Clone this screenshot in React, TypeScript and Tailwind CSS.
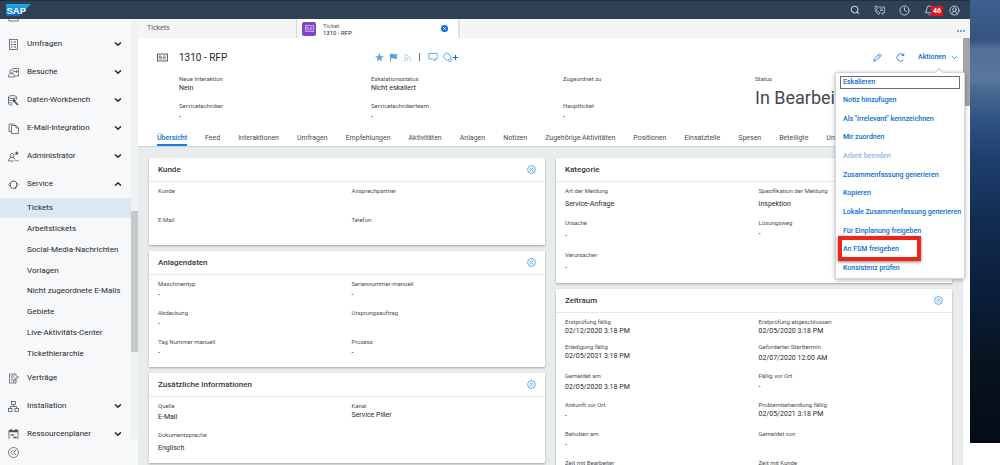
import { useState } from "react";
import type { ReactNode } from "react";
import {
  ChevronDown,
  ChevronUp,
  Clock,
  Bell,
  Search,
  CircleUserRound,
  Rss,
} from "lucide-react";
import clsx from "clsx";

type IconProps = { children: ReactNode; className?: string };

function Glyph({ children, className = "size-[11px]" }: IconProps) {
  return (
    <svg
      viewBox="0 0 22 22"
      fill="none"
      stroke="currentColor"
      strokeWidth="1.5"
      className={className}
      aria-hidden="true"
    >
      {children}
    </svg>
  );
}

const icons = {
  partner: (
    <Glyph>
      <path d="M2 20h18v-5H2zM6 15V9h10v6" />
    </Glyph>
  ),
  survey: (
    <Glyph>
      <rect x="3" y="1" width="16" height="20" />
      <path d="M6 6h3M6 11h3M6 16h3M12 6h4M12 11h4M12 16h4" strokeWidth="2" />
    </Glyph>
  ),
  visit: (
    <Glyph>
      <path d="M9 3h12v15h-7M12 9h6M16 6l3 3-3 3" />
      <circle cx="7" cy="9" r="3.5" />
      <path d="M1 20c0-5 2-7 6-7s6 2 6 7z" />
    </Glyph>
  ),
  data: (
    <Glyph>
      <ellipse cx="9" cy="4" rx="8" ry="3" />
      <path d="M1 4v13c0 2 3 3 8 3M1 8c0 2 3 3 8 3M1 13c0 2 3 3 8 3M17 4v5" />
      <path d="M11 11l9 9" strokeWidth="3.5" />
      <path d="M9 11l3-3 3 3-3 3z" fill="currentColor" />
    </Glyph>
  ),
  mail: (
    <Glyph>
      <path d="M7 17H2V2h9l3 3" />
      <path d="M7 5h9l5 5v11H7z" />
      <path d="M16 5v5h5" />
    </Glyph>
  ),
  admin: (
    <Glyph>
      <circle cx="8" cy="9" r="4" />
      <path d="M1 20c0-5 3-7 7-7 3 0 5 1 6 4M1 20h11" />
      <path d="M15 19h2M19 19h2" strokeWidth="2.5" />
      <path
        d="M17.5 0l1.2 3 3.3.2-2.5 2 .9 3.2-2.9-1.7-2.9 1.7.9-3.2-2.5-2 3.3-.2z"
        fill="currentColor"
        stroke="none"
      />
    </Glyph>
  ),
  service: (
    <Glyph>
      <path d="M5 7a7.5 7.5 0 0 1 12 0M4 15a7.5 7.5 0 0 0 5 4" strokeWidth="2" />
      <path d="M5 7l-4 4 4 4zM17 7l4 4-4 4z" />
      <path d="M17 15c-1 3-3 4-6 4" strokeWidth="2.5" />
    </Glyph>
  ),
  contract: (
    <Glyph>
      <path d="M16 13v7H3V2h13v4M6 6h7M6 10h5M6 14h4" />
      <path d="M11 15l8-9 2 2-8 8-3 1z" />
    </Glyph>
  ),
  install: (
    <Glyph>
      <rect x="7" y="1" width="8" height="6" />
      <rect x="1" y="15" width="7" height="6" />
      <rect x="14" y="15" width="7" height="6" />
      <path d="M11 7v4M4.5 15v-4h13v4" />
    </Glyph>
  ),
  planner: (
    <Glyph>
      <rect x="2" y="3" width="18" height="18" />
      <path d="M2 5h18M6 0v4M16 0v4" strokeWidth="3" />
      <path d="M5 12h6M9 10l2 2-2 2M11 17h7M14 15l-2 2 2 2" strokeWidth="2" />
    </Glyph>
  ),
};

type NavItem = {
  label: string;
  icon: ReactNode;
  leaf?: boolean;
  children?: string[];
};

const navItems: NavItem[] = [
  { label: "Partner", icon: icons.partner },
  { label: "Umfragen", icon: icons.survey },
  { label: "Besuche", icon: icons.visit },
  { label: "Daten-Workbench", icon: icons.data },
  { label: "E-Mail-Integration", icon: icons.mail },
  { label: "Administrator", icon: icons.admin },
  {
    label: "Service",
    icon: icons.service,
    children: [
      "Tickets",
      "Arbeitstickets",
      "Social-Media-Nachrichten",
      "Vorlagen",
      "Nicht zugeordnete E-Mails",
      "Gebiete",
      "Live-Aktivitäts-Center",
      "Tickethierarchie",
    ],
  },
  { label: "Verträge", icon: icons.contract, leaf: true },
  { label: "Installation", icon: icons.install },
  { label: "Ressourcenplaner", icon: icons.planner },
];

const tabs = [
  "Übersicht",
  "Feed",
  "Interaktionen",
  "Umfragen",
  "Empfehlungen",
  "Aktivitäten",
  "Anlagen",
  "Notizen",
  "Zugehörige Aktivitäten",
  "Positionen",
  "Einsatzteile",
  "Spesen",
  "Beteiligte",
  "Unternehmen",
];

const actions = [
  "Eskalieren",
  "Notiz hinzufügen",
  'Als "Irrelevant" kennzeichnen',
  "Mir zuordnen",
  "Arbeit beenden",
  "Zusammenfassung generieren",
  "Kopieren",
  "Lokale Zusammenfassung generieren",
  "Für Einplanung freigeben",
  "An FSM freigeben",
  "Konsistenz prüfen",
];

type Size = "tight" | "normal" | "tall";
type FieldData = { label: string; value?: string; size?: Size };

const headerFields: FieldData[] = [
  { label: "Neue Interaktion", value: "Nein", size: "tight" },
  { label: "Eskalationsstatus", value: "Nicht eskaliert", size: "tight" },
  { label: "Zugeordnet zu", size: "tight" },
  { label: "Servicetechniker", value: "-" },
  { label: "Servicetechnikerteam", value: "-" },
  { label: "Hauptticket", value: "-" },
];

const leftCards: { title: string; fields: FieldData[] }[] = [
  {
    title: "Kunde",
    fields: [
      { label: "Kunde" },
      { label: "Ansprechpartner" },
      { label: "E-Mail" },
      { label: "Telefon" },
    ],
  },
  {
    title: "Anlagendaten",
    fields: [
      { label: "Maschinentyp", value: "-" },
      { label: "Seriennummer-manuell", value: "-" },
      { label: "Abdeckung", value: "-" },
      { label: "Ursprungsauftrag" },
      { label: "Tag Nummer manuell", value: "-" },
      { label: "Prozess", value: "-" },
    ],
  },
  {
    title: "Zusätzliche Informationen",
    fields: [
      { label: "Quelle", value: "E-Mail" },
      { label: "Kanal", value: "Service Piller", size: "tight" },
      { label: "Dokumentsprache", value: "Englisch", size: "tall" },
    ],
  },
];

const rightCards: { title: string; fields: FieldData[] }[] = [
  {
    title: "Kategorie",
    fields: [
      { label: "Art der Meldung", value: "Service-Anfrage", size: "tall" },
      { label: "Spezifikation der Meldung", value: "Inspektion", size: "tall" },
      { label: "Ursache", value: "-", size: "tall" },
      { label: "Lösungsweg", value: "-" },
      { label: "Verursacher", value: "-", size: "tall" },
    ],
  },
  {
    title: "Zeitraum",
    fields: [
      { label: "Erstprüfung fällig", value: "02/12/2020 3:18 PM", size: "tight" },
      { label: "Erstprüfung abgeschlossen", value: "02/05/2020 3:18 PM", size: "tight" },
      { label: "Erledigung fällig", value: "02/05/2021 3:18 PM", size: "tight" },
      { label: "Geforderter Starttermin", value: "02/07/2020 12:00 AM" },
      { label: "Gemeldet am", value: "02/05/2020 3:18 PM" },
      { label: "Fällig vor Ort", value: "-" },
      { label: "Ankunft vor Ort", value: "-" },
      { label: "Problembehandlung fällig", value: "02/05/2021 3:18 PM", size: "tight" },
      { label: "Behoben am", value: "-" },
      { label: "Gemeldet von" },
      { label: "Zeit mit Bearbeiter", value: "-" },
      { label: "Zeit mit Kunde", value: "-" },
    ],
  },
];

function Field({ label, value, size = "normal" }: FieldData) {
  return (
    <div>
      <dt className="text-[6px] leading-[10px] text-[#4a4e52]">{label}</dt>
      <dd
        className={clsx(
          "text-[7px] text-[#25282b]",
          size === "tight" && "h-[10px] leading-[8px]",
          size === "normal" && "h-[14px] leading-[12px]",
          size === "tall" && "h-[17px] leading-[16px]"
        )}
      >
        {value}
      </dd>
    </div>
  );
}

function Card({ title, fields }: { title: string; fields: FieldData[] }) {
  return (
    <section className="bg-white shadow-[0_1px_2px_rgba(0,0,0,0.3)]">
      <header className="flex h-6 items-center justify-between border-b border-[#e8eaec] px-[9px]">
        <h2 className="text-[8px] font-medium text-[#32363a]">{title}</h2>
        <button type="button" aria-label={`${title} einklappen`} className="text-[#4a97e0]">
          <Glyph className="size-[9px]">
            <circle cx="11" cy="11" r="9.5" strokeWidth="2" />
            <path d="M6.5 11l4.5-4.5 4.5 4.5M6.5 16l4.5-4.5 4.5 4.5" strokeWidth="2" />
          </Glyph>
        </button>
      </header>
      <dl className="grid grid-cols-2 gap-y-[5px] pt-1 pb-1.5 pl-[9px]">
        {fields.map((field) => (
          <Field key={field.label} {...field} />
        ))}
      </dl>
    </section>
  );
}

function TopBar() {
  return (
    <header className="flex h-[19px] shrink-0 items-center justify-between border-t border-[#22303e] bg-[#2f4056] pr-[3px] pl-1.5 text-[#c3d3e4]">
      <svg viewBox="0 0 50 24" className="h-3 w-[25px]" role="img" aria-label="SAP">
        <defs>
          <linearGradient id="sap" x1="0" y1="0" x2="0" y2="1">
            <stop offset="0" stopColor="#16b0ee" />
            <stop offset="1" stopColor="#1661be" />
          </linearGradient>
        </defs>
        <path d="M0 0h50L26 24H0z" fill="url(#sap)" />
        <text
          x="1"
          y="19"
          fill="#fff"
          fontSize="19"
          fontWeight="700"
          fontFamily="Liberation Sans, sans-serif"
        >
          SAP
        </text>
      </svg>
      <div className="flex">
        <button type="button" aria-label="Suchen" className="flex w-[25px] justify-center">
          <Search size={10} strokeWidth={2.5} />
        </button>
        <button type="button" aria-label="Telefonie" className="flex w-[25px] justify-center">
          <Glyph className="size-[11px]">
            <path d="M3 2c-3 5 0 14 7 17l2-3-3-3-2 1c-2-2-3-5-2-6l2-1-1-5z" />
            <path d="M9 4h12v11h-3v4l-4-4M12 8h6M12 11h6" />
          </Glyph>
        </button>
        <button type="button" aria-label="Verlauf" className="flex w-[25px] justify-center">
          <Clock size={11} strokeWidth={2} />
        </button>
        <button
          type="button"
          aria-label="Benachrichtigungen"
          className="relative flex w-[25px] justify-center"
        >
          <Bell size={11} strokeWidth={2} />
          <span className="absolute top-px left-[14px] bg-[#e6121d] px-0.5 text-[7px] leading-[10px] font-bold text-white">
            46
          </span>
        </button>
        <button type="button" aria-label="Profil" className="flex w-[25px] justify-center">
          <CircleUserRound size={11} strokeWidth={2} />
        </button>
      </div>
    </header>
  );
}

function SideNav() {
  const [active, setActive] = useState("Tickets");

  return (
    <aside className="flex w-[138px] shrink-0 flex-col bg-[#f7f8fa]">
      <div className="flex min-h-0 flex-1 overflow-hidden">
        <nav className="-mt-[17px] flex-1 text-[8px] text-[#25282b]">
          {navItems.map((item) => (
            <div key={item.label}>
              <button
                type="button"
                aria-expanded={item.leaf ? undefined : Boolean(item.children)}
                className="flex h-7 w-full items-center pr-2 pl-[8px] text-left"
              >
                <span className="w-[19px] text-[#4b5157]">{item.icon}</span>
                <span className="flex-1">{item.label}</span>
                {!item.leaf &&
                  (item.children ? (
                    <ChevronUp size={10} strokeWidth={3.5} />
                  ) : (
                    <ChevronDown size={10} strokeWidth={3.5} />
                  ))}
              </button>
              {item.children && (
                <ul className="flex h-[166px] flex-col justify-between">
                  {item.children.map((child) => (
                    <li key={child}>
                      <a
                        href="#"
                        onClick={() => setActive(child)}
                        className={clsx(
                          "block h-5 pl-[27px] leading-5",
                          active === child && "bg-[#dbe7f3]"
                        )}
                      >
                        {child}
                      </a>
                    </li>
                  ))}
                </ul>
              )}
            </div>
          ))}
        </nav>
        <div className="w-[7px] bg-[#f1f2f3] pt-48">
          <div className="h-[141px] bg-[#c6c8ca]" />
        </div>
      </div>
      <div className="flex h-[26px] items-center pl-2">
        <button type="button" aria-label="Navigation einklappen" className="text-[#4b5157]">
          <Glyph>
            <circle cx="11" cy="11" r="10" />
            <path d="M10.5 6l-5 5 5 5M16 6l-5 5 5 5" />
          </Glyph>
        </button>
      </div>
    </aside>
  );
}

function WorkTabs() {
  return (
    <div className="flex h-[19px] shrink-0 bg-[#f4f6f6] text-[7px] text-[#5c6166]">
      <button type="button" className="w-[159px] border-r border-[#d5d8da] pl-[9px] text-left">
        Tickets
      </button>
      <div className="ml-[3px] flex w-[158px] items-center bg-white pl-0.5">
        <span className="flex size-[14px] items-center justify-center rounded-[2px] bg-[#8246c5] text-[#d9bff5]">
          <TicketIcon className="size-[9px]" />
        </span>
        <span className="flex-1 pl-[7px] text-[6px] leading-[7px]">
          Ticket
          <br />
          <span className="text-[#25282b]">1310 - RFP</span>
        </span>
        <button type="button" aria-label="Tab schließen" className="mr-2.5">
          <svg viewBox="0 0 14 14" className="size-[7px]">
            <circle cx="7" cy="7" r="7" fill="#0a6ed1" />
            <path d="M4.5 4.5l5 5M9.5 4.5l-5 5" stroke="#fff" strokeWidth="2" />
          </svg>
        </button>
      </div>
      <div className="flex flex-1 items-end justify-end border-l-2 border-[#e0e3e5] pr-[5px] pb-1.5">
        <button type="button" aria-label="Weitere" className="flex gap-px">
          <span className="size-0.5 rounded-full bg-[#3d8ddd]" />
          <span className="size-0.5 rounded-full bg-[#3d8ddd]" />
          <span className="size-0.5 rounded-full bg-[#3d8ddd]" />
        </button>
      </div>
    </div>
  );
}

function TicketIcon({ className }: { className: string }) {
  return (
    <Glyph className={className}>
      <rect x="1" y="4" width="20" height="14" strokeWidth="2" />
      <path d="M4 8h5v3H4zM12 8h6M12 11h6M4 14h14" strokeWidth="1.5" />
    </Glyph>
  );
}

function ActionsMenu() {
  return (
    <div className="absolute top-5 -right-[6px] z-20 h-[207px] w-[130px] rounded-[2px] border border-[#d5d8da] bg-white shadow-[0_1px_4px_rgba(0,0,0,0.3)]">
      <span className="absolute -top-[4px] right-[22px] size-[6px] rotate-45 border-t border-l border-[#c9cccf] bg-white" />
      <ul className="grid h-full auto-rows-fr grid-cols-1 text-[7px] font-medium text-[#0a6ed1]">
        {actions.map((action, i) => (
          <li key={action} className="relative flex items-center px-1">
            <button
              type="button"
              disabled={action === "Arbeit beenden"}
              className={clsx(
                "h-[13px] w-full border px-0.5 text-left leading-[11px] whitespace-nowrap disabled:opacity-50",
                i === 0 ? "border-[#6a6d70]" : "border-transparent"
              )}
            >
              {action}
            </button>
            {action === "An FSM freigeben" && (
              <span className="absolute -top-1 left-[2px] h-[25px] w-[83px] border-4 border-[#f0251a] shadow-[0_1px_3px_rgba(0,0,0,0.5)]" />
            )}
          </li>
        ))}
      </ul>
    </div>
  );
}

function TicketHeader() {
  const [menuOpen, setMenuOpen] = useState(true);
  const [activeTab, setActiveTab] = useState("Übersicht");

  return (
    <div className="shrink-0 border-b border-[#cdd1d4] bg-white pt-2">
      <div className="grid h-[22px] grid-cols-[41px_1fr_1fr_1fr_1fr] items-center pr-4">
        <span className="pl-[19px] text-[#5c6166]">
          <TicketIcon className="size-[11px]" />
        </span>
        <h1 className="text-[10px] text-[#25282b]">1310 - RFP</h1>
        <div className="flex items-center pl-1 text-[#5b9fe2]">
          <button type="button" aria-label="Favorit">
            <svg viewBox="0 0 20 20" className="size-[9px]" fill="currentColor">
              <path d="M10 0l2.6 7H20l-6 4.6 2.2 7.4L10 14.6 3.8 19 6 11.6 0 7h7.4z" />
            </svg>
          </button>
          <button type="button" aria-label="Markieren" className="ml-[5px]">
            <svg viewBox="0 0 18 18" className="size-[9px]" fill="currentColor">
              <path d="M2 1h2v16H2zM4 2c4-2 7 2 13 0l-2 4 2 5c-6 2-9-2-13 0z" />
            </svg>
          </button>
          <button type="button" aria-label="Folgen" className="ml-[5px] text-[#9cc5ee]">
            <Rss size={9} strokeWidth={2.5} />
          </button>
          <span className="mr-2 ml-[7px] h-2 w-px bg-[#6a6d70]" />
          <button type="button" aria-label="Kommentieren">
            <Glyph className="size-[10px]">
              <path d="M2 3h18v12h-5v5l-5-5H2z" strokeWidth="2" />
            </Glyph>
          </button>
          <button type="button" aria-label="Tag hinzufügen" className="ml-1 flex items-center">
            <Glyph className="size-[10px]">
              <path d="M3 9l6-7 5 1 6 9-8 7-9-8zM13 20h7v-6" strokeWidth="2" />
            </Glyph>
            <svg viewBox="0 0 5 5" className="ml-px size-[5px] text-[#0a6ed1]" fill="currentColor">
              <path d="M2 0h1v2h2v1H3v2H2V3H0V2h2z" />
            </svg>
          </button>
        </div>
        <div className="relative col-span-2 -mr-3 flex items-center justify-end text-[#0a6ed1]">
          <button type="button" aria-label="Bearbeiten">
            <Glyph className="size-[9px]">
              <path d="M2 20l2-6L16 2l4 4L8 18zM13 5l4 4" strokeWidth="2" />
            </Glyph>
          </button>
          <button type="button" aria-label="Aktualisieren" className="ml-[14px]">
            <Glyph className="size-[9px]">
              <path d="M18 17a9 9 0 1 1 0-12M19 1v5h-5" strokeWidth="2" />
            </Glyph>
          </button>
          <button
            type="button"
            aria-expanded={menuOpen}
            onClick={() => setMenuOpen(!menuOpen)}
            className="ml-[13px] flex items-center gap-1 text-[7px] font-medium"
          >
            Aktionen
            <ChevronDown size={9} strokeWidth={2} />
          </button>
          {menuOpen && <ActionsMenu />}
        </div>
      </div>

      <div className="mt-1.5 grid grid-cols-4 pr-4 pl-[41px]">
        <dl className="col-span-3 grid grid-cols-3 gap-y-[7px]">
          {headerFields.map((field) => (
            <Field key={field.label} {...field} />
          ))}
        </dl>
        <dl>
          <dt className="text-[6px] leading-[10px] text-[#4a4e52]">Status</dt>
          <dd className="overflow-hidden text-[18px] leading-7 whitespace-nowrap text-[#45494f]">
            In Bearbeitung
          </dd>
        </dl>
      </div>

      <nav className="mt-2 flex gap-[18px] overflow-hidden pl-[19px] text-[7px] text-[#4a4e52]">
        {tabs.map((tab) => (
          <button
            key={tab}
            type="button"
            onClick={() => setActiveTab(tab)}
            className={clsx(
              "h-[13px] border-b-2 leading-[11px] whitespace-nowrap",
              tab === activeTab
                ? "border-[#1b7de0] font-medium text-[#0a6ed1]"
                : "border-transparent"
            )}
          >
            {tab}
          </button>
        ))}
      </nav>
    </div>
  );
}

function App() {
  return (
    <div className="flex h-screen items-stretch overflow-hidden bg-white font-[Roboto,sans-serif]">
      <div className="flex min-w-0 flex-1 flex-col">
        <TopBar />
        <div className="flex min-h-0 flex-1">
          <SideNav />
          <main className="flex min-w-0 flex-1 flex-col">
            <WorkTabs />
            <div className="flex min-h-0 flex-1">
              <div className="flex min-w-0 flex-1 flex-col bg-[#e8ecec]">
                <TicketHeader />
                <div className="grid min-h-0 flex-1 grid-cols-2 gap-[11px] overflow-hidden px-[11px] pt-[11px]">
                  <div className="flex flex-col gap-1.5">
                    {leftCards.map((card) => (
                      <Card key={card.title} {...card} />
                    ))}
                  </div>
                  <div className="flex flex-col gap-1.5">
                    {rightCards.map((card) => (
                      <Card key={card.title} {...card} />
                    ))}
                  </div>
                </div>
              </div>
              <div className="w-[7px] bg-white">
                <div className="h-[68px] bg-[#a3a5a7]" />
              </div>
            </div>
          </main>
        </div>
      </div>
      <div className="mb-[22px] w-[30px] shrink-0 bg-[linear-gradient(180deg,#3f6190_0%,#34527f_9%,#546f9a_11%,#5a779f_18%,#4a6a94_20%,#2f5384_27%,#1d3e6c_36%,#122c50_50%,#0b1f3b_65%,#07141f_82%,#040b16_100%)]" />
    </div>
  );
}

export default App;
